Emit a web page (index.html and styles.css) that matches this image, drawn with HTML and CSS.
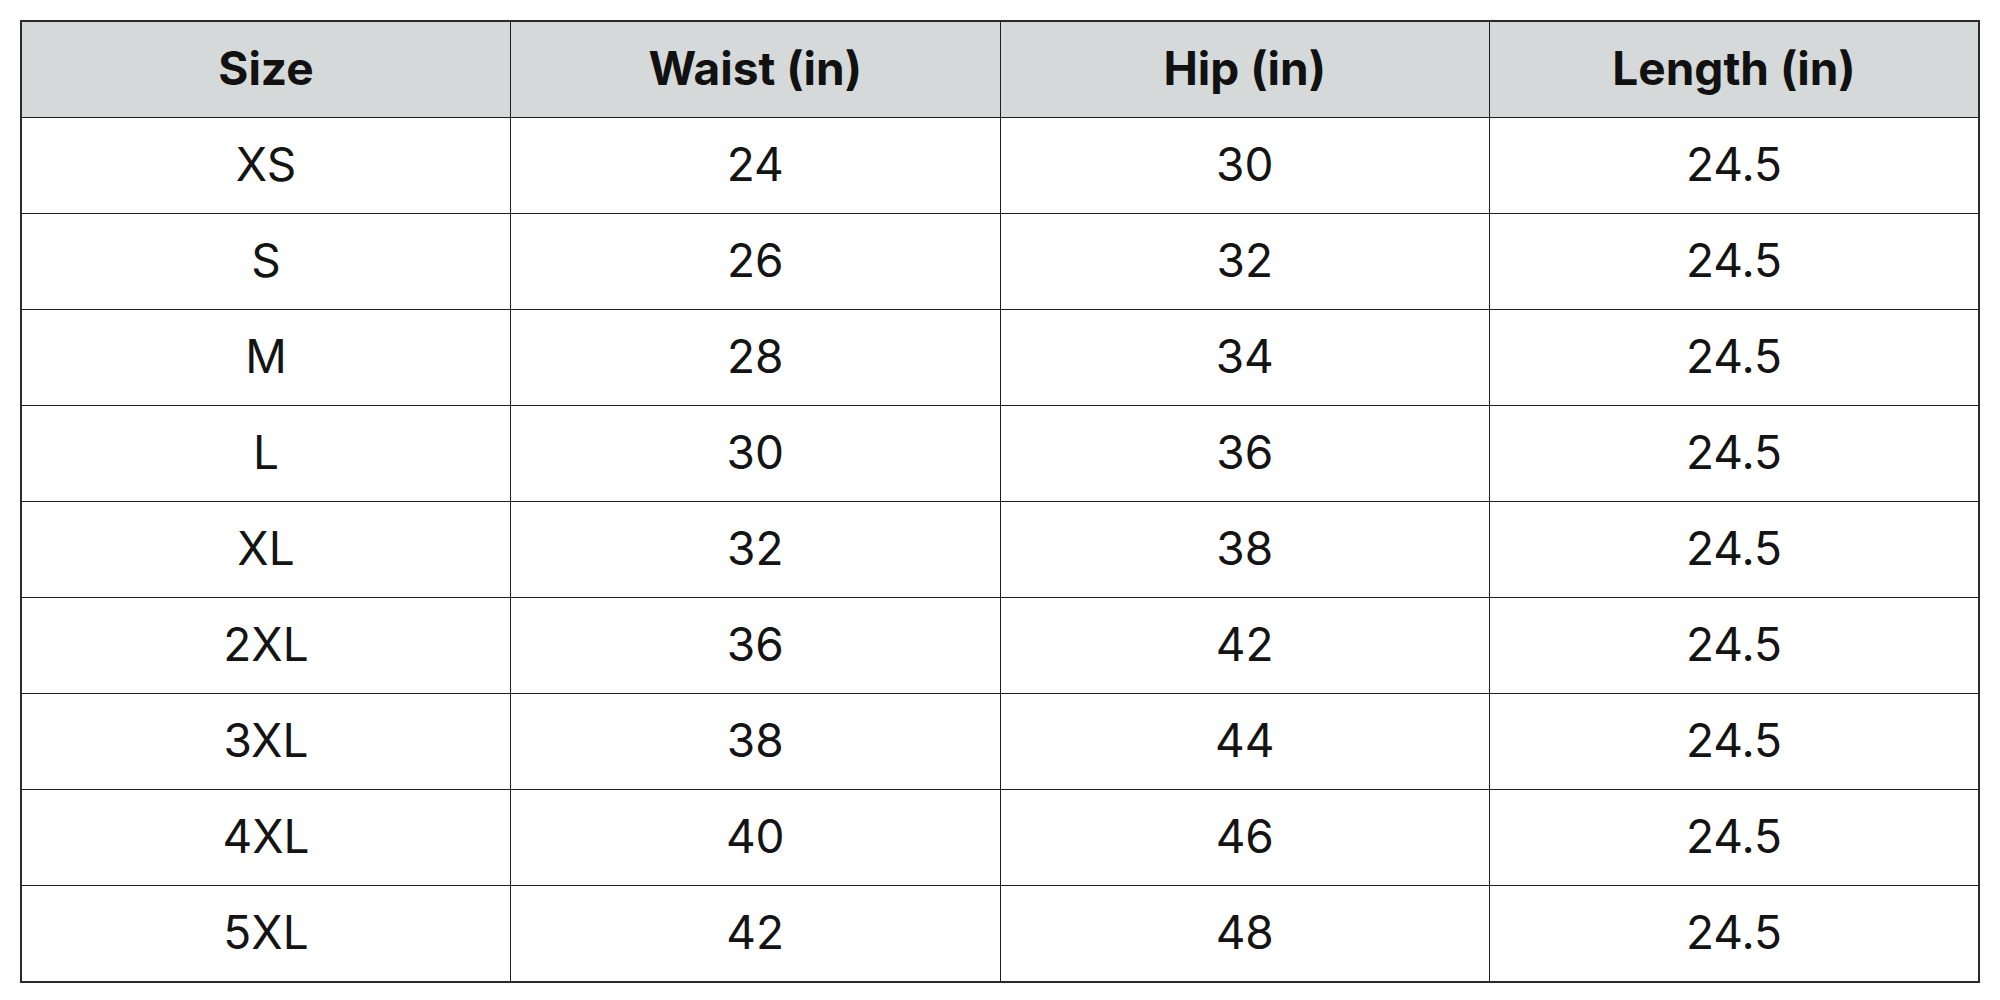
FILE: index.html
```html
<!DOCTYPE html>
<html>
<head>
<meta charset="utf-8">
<link rel="stylesheet" href="styles.css">
</head>
<body>
<table class="size-chart">
  <thead>
    <tr><th>Size</th><th>Waist (in)</th><th>Hip (in)</th><th>Length (in)</th></tr>
  </thead>
  <tbody>
    <tr><td>XS</td><td>24</td><td>30</td><td>24.5</td></tr>
    <tr><td>S</td><td>26</td><td>32</td><td>24.5</td></tr>
    <tr><td>M</td><td>28</td><td>34</td><td>24.5</td></tr>
    <tr><td>L</td><td>30</td><td>36</td><td>24.5</td></tr>
    <tr><td>XL</td><td>32</td><td>38</td><td>24.5</td></tr>
    <tr><td>2XL</td><td>36</td><td>42</td><td>24.5</td></tr>
    <tr><td>3XL</td><td>38</td><td>44</td><td>24.5</td></tr>
    <tr><td>4XL</td><td>40</td><td>46</td><td>24.5</td></tr>
    <tr><td>5XL</td><td>42</td><td>48</td><td>24.5</td></tr>
  </tbody>
</table>
</body>
</html>
```
FILE: styles.css
```css
html, body {
  margin: 0;
  padding: 0;
  background: #ffffff;
}
body {
  padding: 20px;
  font-family: "Inter", "Liberation Sans", sans-serif;
  color: #111111;
}
.size-chart {
  width: 1960px;
  border-collapse: collapse;
  table-layout: fixed;
  border: 2px solid #2a2a2a;
}
.size-chart th,
.size-chart td {
  border: 1px solid #1e1e1e;
  text-align: center;
  vertical-align: middle;
  padding: 0 0 3px 0;
  height: 92px;
  font-size: 46px;
  line-height: 1;
}
.size-chart th {
  background: #d5d9da;
  font-weight: 700;
  color: #111111;
}
.size-chart td {
  font-weight: 400;
  color: #141414;
}
```
